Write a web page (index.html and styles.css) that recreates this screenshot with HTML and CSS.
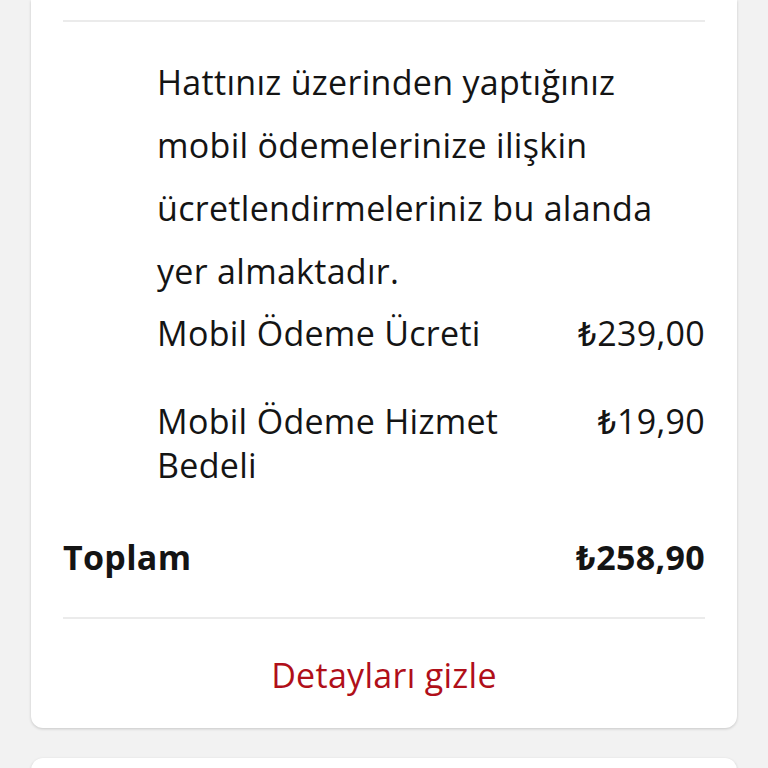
FILE: index.html
```html
<!DOCTYPE html>
<html lang="tr">
  <head>
    <meta charset="UTF-8" />
    <meta name="viewport" content="width=device-width, initial-scale=1.0" />
    <title>Fatura detayı</title>
    <link rel="stylesheet" href="styles.css">
  </head>
  <body>
    <!-- fatura kartı -->
    <div class="card">
      <div class="divider top"></div>

      <div class="detail">
        <p class="info">
          Hattınız üzerinden yaptığınız mobil ödemelerinize ilişkin ücretlendirmeleriniz bu alanda yer almaktadır.
        </p>
        <div class="fee-row">
          <div class="fee-name">Mobil Ödeme Ücreti</div>
          <div class="fee-price">₺239,00</div>
        </div>
        <div class="fee-row second">
          <div class="fee-name">Mobil Ödeme Hizmet Bedeli</div>
          <div class="fee-price">₺19,90</div>
        </div>
      </div>

      <div class="total-row">
        <div>Toplam</div>
        <div>₺258,90</div>
      </div>

      <div class="divider"></div>

      <div class="toggle">Detayları gizle</div>
    </div>

    <!-- sonraki kart -->
    <div class="card next"></div>
  </body>
</html>
```

FILE: styles.css
```css
body {
  margin: 0;
  background-color: #f2f2f2;
  font-family: "Open Sans", Roboto, sans-serif;
  color: #141414;
  font-size: 34px;
  letter-spacing: 0.3px;
}
.card {
  margin: 0 31px;
  padding: 20px 32px 31px;
  background-color: #fff;
  border-radius: 0 0 12px 12px;
  box-shadow: 0 1px 3px rgba(0, 0, 0, 0.18);
}
.divider {
  height: 2px;
  background-color: #ebebeb;
  margin: 38px 0 34px;
}
.divider.top {
  margin: 0;
}
.detail {
  margin-left: 94px;
}
.info {
  margin: 29px 0 8px;
  line-height: 63px;
}
.fee-row {
  display: flex;
  justify-content: space-between;
  gap: 40px;
  line-height: 44px;
}
.fee-row.second {
  margin-top: 44px;
}
.fee-name {
  width: 360px;
}
.total-row {
  display: flex;
  justify-content: space-between;
  margin-top: 48px;
  line-height: 44px;
  font-weight: bold;
}
.toggle {
  text-align: center;
  line-height: 44px;
  color: #b00f19;
}
.card.next {
  margin-top: 30px;
  height: 40px;
  padding: 0;
  border-radius: 12px 12px 0 0;
}
```
